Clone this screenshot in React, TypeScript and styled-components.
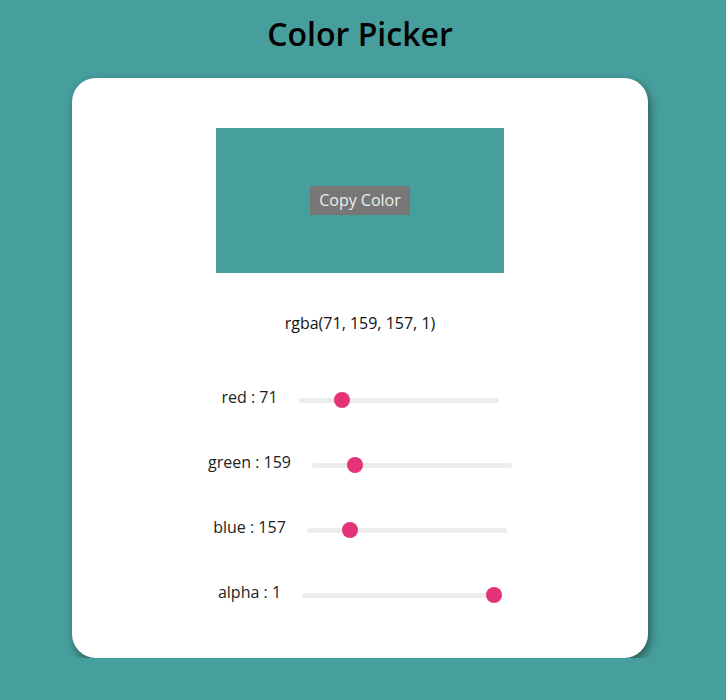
import React from "react";
import styled, { createGlobalStyle } from "styled-components";

const GlobalStyle = createGlobalStyle`
  html, body {
    margin: 0;
    padding: 0;
    background: #479f9d;
    font-family: "Open Sans", "Liberation Sans", sans-serif;
  }
`;

const Page = styled.div`
  width: 720px;
  padding-top: 12px;
  display: flex;
  flex-direction: column;
  align-items: center;
`;

const Title = styled.h1`
  margin: 0 0 22px;
  font-size: 32px;
  font-weight: 600;
  line-height: 1.362;
  color: #000;
`;

const Card = styled.div`
  width: 576px;
  box-sizing: border-box;
  background: #fff;
  border-radius: 24px;
  box-shadow: 2px 4px 10px rgba(0, 0, 0, 0.45);
  padding: 50px 0 51px;
  display: flex;
  flex-direction: column;
  align-items: center;
`;

const Preview = styled.div<{ $color: string }>`
  width: 288px;
  height: 145px;
  background: ${(p) => p.$color};
  display: flex;
  align-items: center;
  justify-content: center;
`;

const CopyButton = styled.button`
  border: none;
  margin: 0;
  background: #777777;
  color: #eeeeee;
  font-family: "Open Sans", "Liberation Sans", sans-serif;
  font-size: 16px;
  line-height: 21px;
  padding: 4px 9px;
  width: 100px;
  cursor: pointer;
`;

const ColorText = styled.div`
  margin: 39px 0 48px;
  font-size: 16px;
  line-height: 22px;
  color: #111;
`;

const Rows = styled.div`
  display: flex;
  flex-direction: column;
  gap: 35px;
  align-items: center;
`;

const Row = styled.div`
  height: 30px;
  display: flex;
  align-items: center;
  gap: 21px;
`;

const Label = styled.span`
  font-size: 16px;
  line-height: 22px;
  color: #222;
  white-space: nowrap;
`;

const Range = styled.input`
  -webkit-appearance: none;
  appearance: none;
  width: 200px;
  height: 16px;
  margin: 8px 0 0;
  padding: 0;
  background: transparent;
  outline: none;

  &::-webkit-slider-runnable-track {
    height: 5px;
    border-radius: 3px;
    background: #ececec;
  }
  &::-webkit-slider-thumb {
    -webkit-appearance: none;
    appearance: none;
    width: 16px;
    height: 16px;
    border-radius: 50%;
    background: #e5337a;
    border: none;
    margin-top: -6px;
  }
  &::-moz-range-track {
    height: 5px;
    border-radius: 3px;
    background: #ececec;
  }
  &::-moz-range-thumb {
    width: 16px;
    height: 16px;
    border-radius: 50%;
    background: #e5337a;
    border: none;
  }
`;

const channels = [
  { name: "red", value: 71, pos: 19, max: 100 },
  { name: "green", value: 159, pos: 19, max: 100 },
  { name: "blue", value: 157, pos: 19, max: 100 },
  { name: "alpha", value: 1, pos: 100, max: 100 },
];

export default function App() {
  const rgba = "rgba(71, 159, 157, 1)";
  return (
    <>
      <GlobalStyle />
      <Page>
        <Title>Color Picker</Title>
        <Card>
          <Preview $color={rgba}>
            <CopyButton>Copy Color</CopyButton>
          </Preview>
          <ColorText>{rgba}</ColorText>
          <Rows>
            {channels.map((c) => (
              <Row key={c.name}>
                <Label>
                  {c.name} : {c.value}
                </Label>
                <Range
                  type="range"
                  min={0}
                  max={c.max}
                  value={c.pos}
                  onChange={() => {}}
                />
              </Row>
            ))}
          </Rows>
        </Card>
      </Page>
    </>
  );
}
